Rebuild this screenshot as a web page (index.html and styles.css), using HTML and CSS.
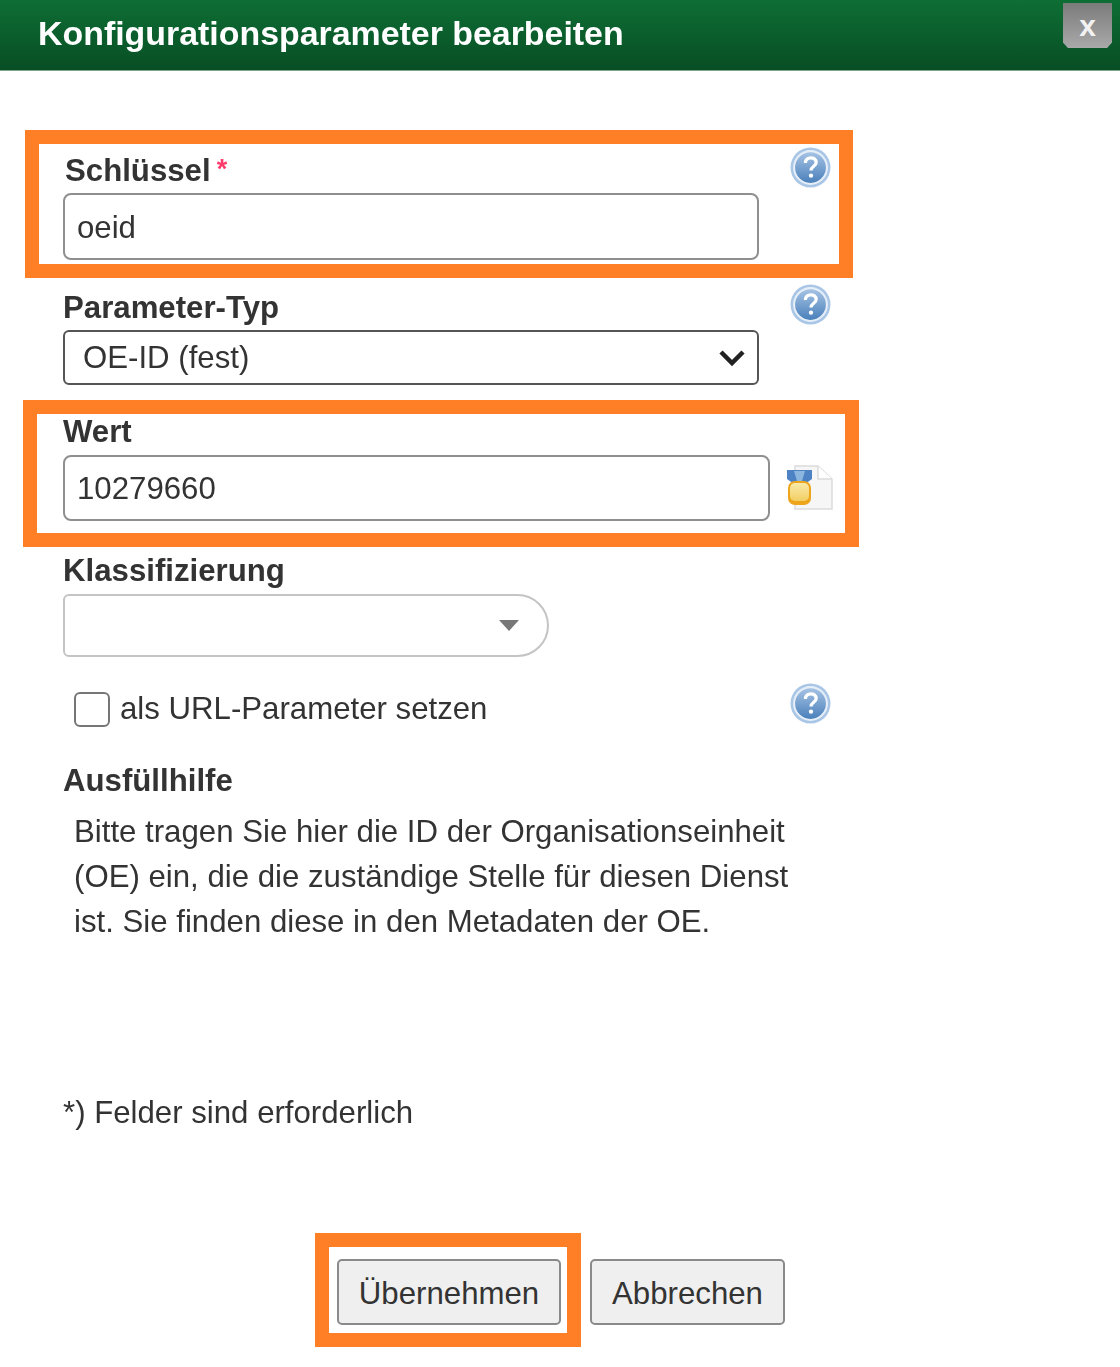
FILE: index.html
```html
<!DOCTYPE html>
<html lang="de">
<head>
    <meta charset="UTF-8">
    <title>Konfigurationsparameter bearbeiten</title>
    <link rel="stylesheet" href="styles.css">
</head>
<body>
    <div class="titlebar">
        <h1 class="title">Konfigurationsparameter bearbeiten</h1>
        <button class="close">x</button>
    </div>
    <form class="form">
        <div class="row row-key">
            <div class="mark mark-key"></div>
            <div class="field">
                <label class="label label-key">Schlüssel<span class="req">*</span></label>
                <input class="input" type="text" value="oeid">
            </div>
            <svg class="help" viewBox="0 0 40 40"><use href="#help-icon"/></svg>
        </div>
        <div class="row row-type">
            <div class="field">
                <label class="label">Parameter-Typ</label>
                <div class="select-wrap">
                    <select class="select"><option>OE-ID (fest)</option></select>
                    <svg class="chevron" viewBox="0 0 28 18"><path d="M3 3 L14 14 L25 3" fill="none" stroke="#222" stroke-width="4.5"/></svg>
                </div>
            </div>
            <svg class="help" viewBox="0 0 40 40">
                <defs>
                    <linearGradient id="help-fill" x1="0" y1="0" x2="0" y2="1">
                        <stop offset="0" stop-color="#a6c3e4"/>
                        <stop offset="1" stop-color="#4a80bb"/>
                    </linearGradient>
                </defs>
                <g id="help-icon">
                    <circle cx="20" cy="20" r="19.5" fill="#a9c6e6"/>
                    <circle cx="20" cy="20" r="17" fill="#e6eff8"/>
                    <circle cx="20" cy="20" r="15" fill="url(#help-fill)"/>
                    <path d="M15 15.5 C15 9 25.5 9 25.5 15 C25.5 19 20.5 18.5 20.5 23" fill="none" stroke="#fff" stroke-width="3.2"/>
                    <circle cx="20.5" cy="28" r="2.1" fill="#fff"/>
                </g>
            </svg>
        </div>
        <div class="row row-value">
            <div class="mark mark-value"></div>
            <div class="field">
                <label class="label">Wert</label>
                <div class="value-line">
                    <input class="input input-wide" type="text" value="10279660">
                    <svg class="medal" viewBox="0 0 46 46">
                        <defs>
                            <linearGradient id="medal-fill" x1="0" y1="0" x2="0" y2="1">
                                <stop offset="0" stop-color="#f9e9a8"/>
                                <stop offset="1" stop-color="#f2cf62"/>
                            </linearGradient>
                        </defs>
                        <path d="M8 1 H31 L45 14 V44 H8 Z" fill="#f6f6f6" stroke="#dcdcdc" stroke-width="1.5"/>
                        <path d="M31 1 V14 H45" fill="#fff" stroke="#dcdcdc" stroke-width="1.5"/>
                        <path d="M0 5 H25 V14 L18 19 H7 L0 14 Z" fill="#4d83c4"/>
                        <path d="M7 6 H18 L15 16 H10 Z" fill="#8db6de"/>
                        <rect x="1" y="16" width="23" height="24" rx="7" fill="#eda51c"/>
                        <rect x="3" y="18" width="19" height="18" rx="5" fill="url(#medal-fill)"/>
                    </svg>
                </div>
            </div>
        </div>
        <div class="row row-class">
            <div class="field">
                <label class="label">Klassifizierung</label>
                <div class="combo"><span class="combo-arrow"></span></div>
            </div>
        </div>
        <div class="row row-check">
            <div class="check-line">
                <input class="check" type="checkbox">
                <span class="check-text">als URL-Parameter setzen</span>
            </div>
            <svg class="help" viewBox="0 0 40 40"><use href="#help-icon"/></svg>
        </div>
        <div class="hint">
            <h2 class="hint-title">Ausfüllhilfe</h2>
            <p class="hint-text">Bitte tragen Sie hier die ID der Organisationseinheit<br>(OE) ein, die die zuständige Stelle für diesen Dienst<br>ist. Sie finden diese in den Metadaten der OE.</p>
        </div>
        <p class="note">*) Felder sind erforderlich</p>
        <div class="buttons">
            <div class="btn-wrap">
                <div class="mark mark-btn"></div>
                <button class="btn btn-ok" type="button">Übernehmen</button>
            </div>
            <button class="btn btn-cancel" type="button">Abbrechen</button>
        </div>
    </form>
</body>
</html>
```

FILE: styles.css
```css
* {
    box-sizing: border-box;
}
body {
    margin: 0;
    background: #fff;
    color: #333;
    font-family: 'Liberation Sans', Arial, sans-serif;
    font-size: 31.2px;
    filter: blur(0.6px);
}
.titlebar {
    display: flex;
    justify-content: space-between;
    height: 71px;
    padding: 3px 8px 0 38px;
    background: linear-gradient(#0e6e34, #084e24);
    border-bottom: 1px solid #7fa58d;
}
.title {
    margin: 9px 0 0;
    font-size: 33.9px;
    line-height: 42px;
    font-weight: bold;
    color: #fff;
}
.close {
    width: 49px;
    height: 45px;
    padding: 0;
    border: none;
    background: linear-gradient(#7b7b7b, #a9a9a9);
    clip-path: polygon(0 0, 100% 0, 100% 88%, 90% 100%, 10% 100%, 0 88%);
    color: #f2f2f2;
    font-family: inherit;
    font-size: 30px;
    font-weight: bold;
}
.form {
    padding: 81px 0 42px 63px;
    width: 880px;
}
.row {
    position: relative;
    display: flex;
    align-items: flex-start;
}
.mark {
    position: absolute;
    border: 14px solid #ff7f27;
}
.mark-key {
    left: -38px;
    top: -22px;
    width: 828px;
    height: 148px;
}
.mark-value {
    left: -40px;
    top: -13px;
    width: 836px;
    height: 147px;
}
.mark-btn {
    left: -22px;
    top: -26px;
    width: 266px;
    height: 114px;
}
.field {
    width: 696px;
}
.label {
    display: block;
    height: 37px;
    line-height: 37px;
    font-weight: bold;
    margin-bottom: 4px;
}
.label-key {
    padding-left: 2px;
}
.req {
    color: #ff3b6b;
    margin-left: 6px;
    position: relative;
    top: -3px;
    font-size: 27px;
    font-weight: bold;
}
.input {
    display: block;
    width: 696px;
    height: 67px;
    padding: 2px 12px 0;
    border: 2px solid #8f8f8f;
    border-radius: 8px;
    background: #fff;
    color: #333;
    font: inherit;
    outline: none;
}
.help {
    width: 41px;
    height: 41px;
    margin: -5px 0 0 31px;
}
.select-wrap {
    position: relative;
}
.select {
    display: block;
    width: 696px;
    height: 55px;
    padding: 0 18px;
    border: 2px solid #555;
    border-radius: 6px;
    background: #fff;
    color: #333;
    font: inherit;
    appearance: none;
    outline: none;
}
.chevron {
    position: absolute;
    right: 13px;
    top: 19px;
    width: 28px;
    height: 18px;
}
.row-type {
    margin-top: 29px;
}
.row-value {
    margin-top: 28px;
}
.row-value .label {
    margin-bottom: 5px;
}
.value-line {
    display: flex;
    align-items: center;
    width: 780px;
}
.input-wide {
    width: 707px;
    height: 66px;
    flex: none;
}
.medal {
    width: 46px;
    height: 46px;
    margin-left: 17px;
    flex: none;
}
.row-class {
    margin-top: 31px;
}
.row-class .label {
    margin-bottom: 5px;
}
.combo {
    display: flex;
    align-items: center;
    justify-content: flex-end;
    width: 486px;
    height: 63px;
    padding-right: 28px;
    border: 2px solid #c4c4c4;
    border-radius: 6px 32px 32px 6px;
}
.combo-arrow {
    width: 0;
    height: 0;
    border-left: 10px solid transparent;
    border-right: 10px solid transparent;
    border-top: 11px solid #777;
}
.row-check {
    margin-top: 34px;
    justify-content: space-between;
    width: 768px;
}
.check-line {
    display: flex;
    align-items: center;
    padding-left: 11px;
}
.check {
    appearance: none;
    width: 36px;
    height: 35px;
    margin: 0 10px 0 0;
    border: 2px solid #767676;
    border-radius: 6px;
    background: #fff;
}
.row-check .help {
    margin: -8px 0 0;
}
.hint {
    margin-top: 35px;
}
.hint-title {
    margin: 0;
    font-size: inherit;
    line-height: 37px;
    font-weight: bold;
}
.hint-text {
    margin: 10px 0 0 11px;
    line-height: 45px;
}
.note {
    margin: 150px 0 0;
    line-height: 37px;
}
.buttons {
    display: flex;
    gap: 29px;
    margin: 128px 0 0 274px;
}
.btn-wrap {
    position: relative;
}
.btn {
    position: relative;
    height: 66px;
    padding: 4px 0 0;
    border: 2px solid #8a8a8a;
    border-radius: 5px;
    background: #efefef;
    color: #333;
    font: inherit;
}
.btn-ok {
    width: 224px;
}
.btn-cancel {
    width: 195px;
}
```
